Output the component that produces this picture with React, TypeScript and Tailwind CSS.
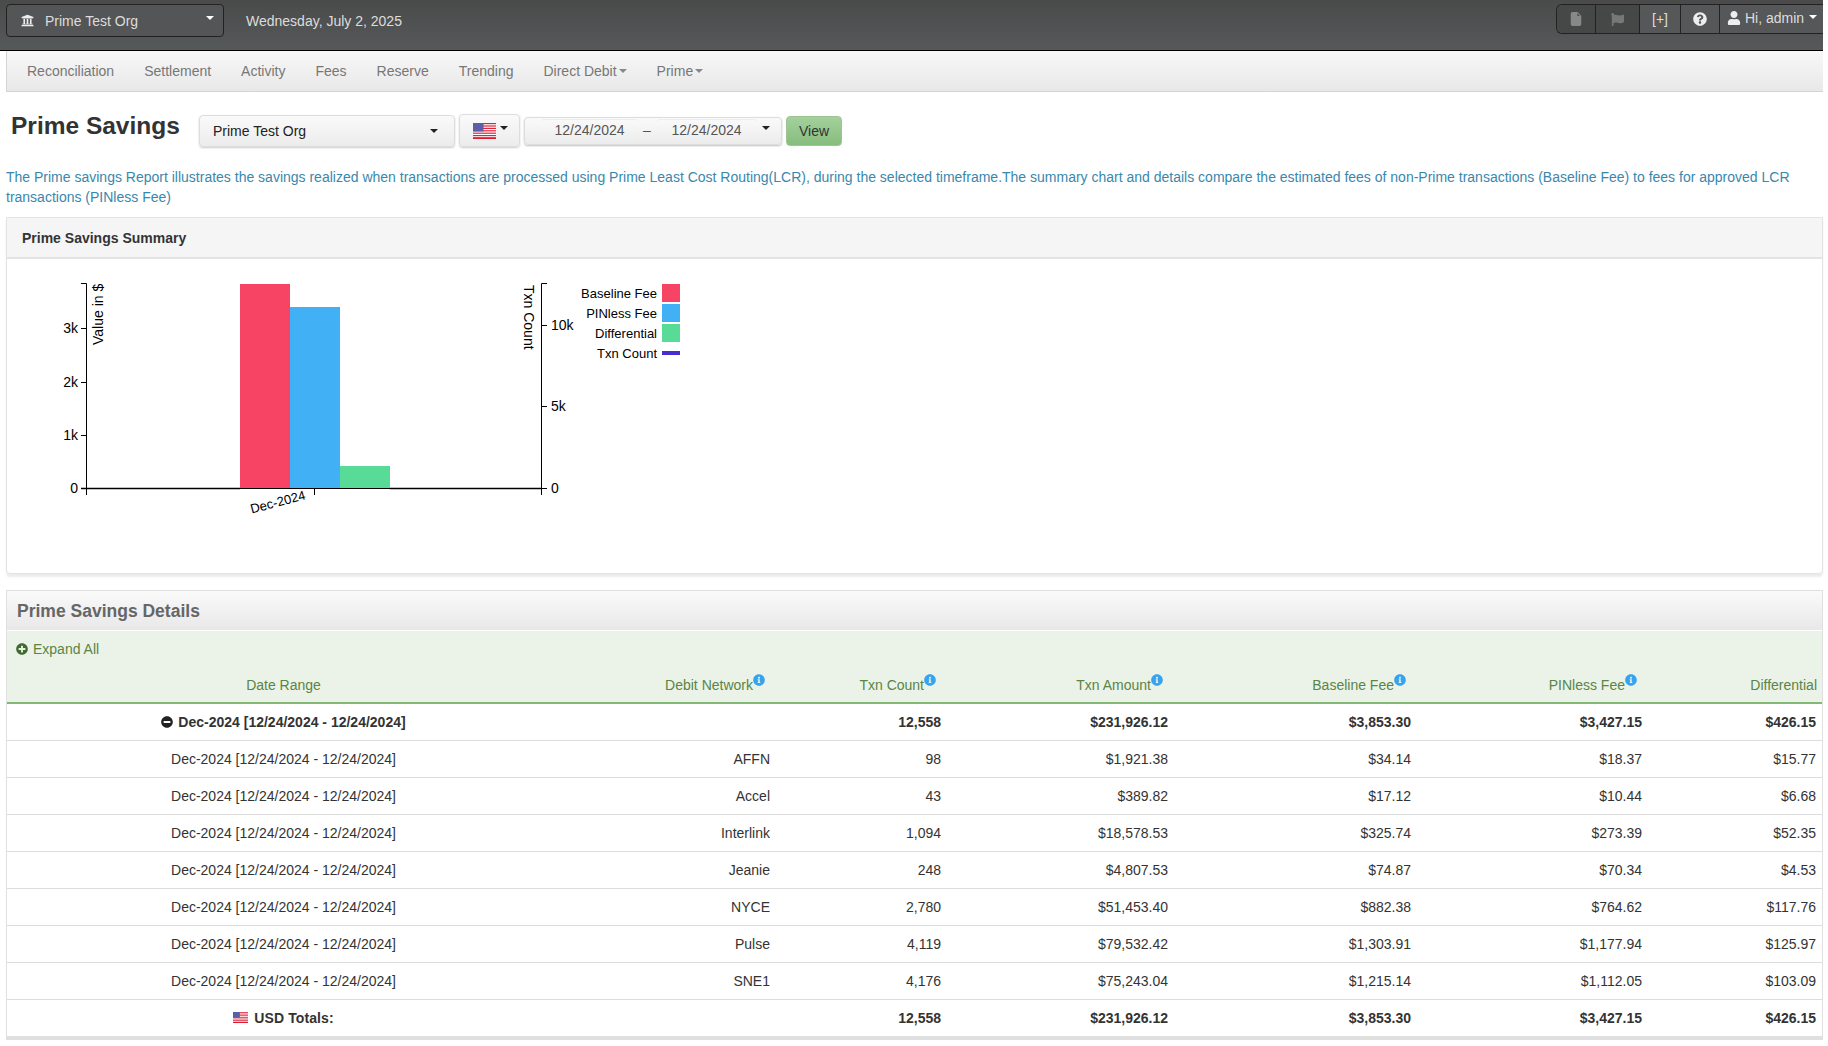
import React from 'react';
import { BsFileEarmarkFill } from 'react-icons/bs';
import { FaFlag, FaInfoCircle, FaMinusCircle, FaPlusCircle, FaQuestionCircle, FaUniversity, FaUser } from 'react-icons/fa';

const navItems = [
  { label: 'Reconciliation' },
  { label: 'Settlement' },
  { label: 'Activity' },
  { label: 'Fees' },
  { label: 'Reserve' },
  { label: 'Trending' },
  { label: 'Direct Debit', caret: true },
  { label: 'Prime', caret: true },
];

const range = 'Dec-2024 [12/24/2024 - 12/24/2024]';

const rows = [
  ['AFFN', '98', '$1,921.38', '$34.14', '$18.37', '$15.77'],
  ['Accel', '43', '$389.82', '$17.12', '$10.44', '$6.68'],
  ['Interlink', '1,094', '$18,578.53', '$325.74', '$273.39', '$52.35'],
  ['Jeanie', '248', '$4,807.53', '$74.87', '$70.34', '$4.53'],
  ['NYCE', '2,780', '$51,453.40', '$882.38', '$764.62', '$117.76'],
  ['Pulse', '4,119', '$79,532.42', '$1,303.91', '$1,177.94', '$125.97'],
  ['SNE1', '4,176', '$75,243.04', '$1,215.14', '$1,112.05', '$103.09'],
];

const totals = ['12,558', '$231,926.12', '$3,853.30', '$3,427.15', '$426.15'];

const headers = [
  { label: 'Debit Network', info: true },
  { label: 'Txn Count', info: true },
  { label: 'Txn Amount', info: true },
  { label: 'Baseline Fee', info: true },
  { label: 'PINless Fee', info: true },
  { label: 'Differential', info: false },
];

const Caret = ({ className }: { className: string }) => (
  <span className={`inline-block h-0 w-0 border-x-4 border-t-4 border-x-transparent ${className}`} />
);

const UsFlag = ({ w, h }: { w: number; h: number }) => (
  <svg width={w} height={h} viewBox="0 0 24 16" preserveAspectRatio="none" className="shrink-0">
    <rect width="24" height="16" fill="#fff" />
    {[0, 2.4, 4.8, 7.2, 9.6, 12, 14.4].map((y) => (
      <rect key={y} y={y} width="24" height="1.2" fill="#e0253a" />
    ))}
    <rect y="14.4" width="24" height="1.6" fill="#d81f33" />
    <rect width="11" height="8.4" fill="#5a5fa8" />
  </svg>
);

const Chart = () => (
  <svg width="700" height="300" viewBox="7 259 700 300" className="block" fontFamily="'Liberation Sans', Arial, sans-serif" fontSize="14" fill="#000">
    <rect x="240" y="284" width="50" height="205" fill="#f74465" />
    <rect x="290" y="307" width="50" height="182" fill="#41b0f5" />
    <rect x="340" y="466" width="50" height="23" fill="#59db98" />

    <path d="M81 283.5H86.5V495M81 328.5H86.5M81 382.5H86.5M81 435.5H86.5M81 488.5H546M314.5 489V495" fill="none" stroke="#000" />
    <path d="M547 283.5H541.5V495M547 325.5H541.5M547 406.5H541.5M541.5 488.5H547" fill="none" stroke="#000" />
    <path d="M81 488.5H240M390 488.5H541" fill="none" stroke="#000" strokeWidth="1.5" />

    <text x="78" y="333" textAnchor="end">3k</text>
    <text x="78" y="387" textAnchor="end">2k</text>
    <text x="78" y="440" textAnchor="end">1k</text>
    <text x="78" y="493" textAnchor="end">0</text>
    <text x="551" y="330">10k</text>
    <text x="551" y="411">5k</text>
    <text x="551" y="493">0</text>

    <text transform="translate(103 345) rotate(-90)">Value in $</text>
    <text transform="translate(524 285) rotate(90)">Txn Count</text>
    <text transform="translate(278 503) rotate(-15)" textAnchor="middle" dominantBaseline="middle" fontSize="13">Dec-2024</text>

    <g fontSize="13" textAnchor="end">
      <text x="657" y="297.5">Baseline Fee</text>
      <text x="657" y="317.5">PINless Fee</text>
      <text x="657" y="337.5">Differential</text>
      <text x="657" y="357.5">Txn Count</text>
    </g>
    <rect x="662" y="284" width="18" height="18" fill="#f74465" />
    <rect x="662" y="304" width="18" height="18" fill="#41b0f5" />
    <rect x="662" y="324" width="18" height="18" fill="#59db98" />
    <rect x="662" y="351" width="18" height="4" fill="#4a2dd0" />
  </svg>
);

export default function App() {
  return (
    <div className="mr-[5px] font-['Liberation_Sans',Arial,sans-serif] text-sm leading-5 text-[#333]">
      {/* top bar */}
      <header className="flex h-[51px] items-start border-b border-black bg-gradient-to-b from-[#4a4a4a] to-[#56595a]">
        <button className="ml-[6px] mt-1 flex h-[33px] w-[218px] items-center rounded border border-[#222] bg-[#535556] pl-[14px] pr-[9px] text-[#ddd]">
          <FaUniversity className="size-[13px] text-[#eee]" />
          <span className="ml-[11px]">Prime Test Org</span>
          <Caret className="mb-[5px] ml-auto border-t-white" />
        </button>
        <span className="ml-[22px] mt-[11px] text-[#ddd]">Wednesday, July 2, 2025</span>
        <div className="ml-auto mt-1 flex h-[30px] overflow-hidden rounded-l-md border-y border-l border-[#222] text-[#ddd]">
          <span className="flex w-[39px] items-center justify-center border-r border-[#222] bg-[#464747] text-[#888]">
            <BsFileEarmarkFill className="size-[14px]" />
          </span>
          <span className="flex w-[44px] items-center justify-center border-r border-[#222] bg-[#464747] text-[#777]">
            <FaFlag className="size-[13px]" />
          </span>
          <span className="flex w-[41px] items-center justify-center border-r border-[#222] bg-[#555758]">[+]</span>
          <span className="flex w-[39px] items-center justify-center border-r border-[#222] bg-[#555758]">
            <FaQuestionCircle className="size-[14px] text-[#eee]" />
          </span>
          <span className="flex w-[103px] items-start bg-[#555758] pl-[7px] pt-[3px]">
            <FaUser className="mr-[4px] mt-[3px] size-[14px] text-[#eee]" />
            Hi, admin
            <Caret className="ml-[5px] mt-[7px] border-t-white" />
          </span>
        </div>
      </header>

      {/* nav */}
      <nav className="ml-[6px] flex h-[41px] items-center border-b border-l border-[#d4d4d4] bg-gradient-to-b from-[#f8f8f8] to-[#e8e8e8] pl-[5px] text-[#777]">
        {navItems.map((item) => (
          <span key={item.label} className="flex items-center px-[15px]">
            {item.label}
            {item.caret && <Caret className="ml-[2px] border-t-[#888]" />}
          </span>
        ))}
      </nav>

      {/* title row */}
      <div className="flex items-start pl-[11px] pt-[22px]">
        <h1 className="-mt-0.5 w-[188px] text-[24.5px] font-bold leading-[28px]">Prime Savings</h1>
        <button className="mt-px flex h-8 w-[256px] items-center rounded border border-[#ddd] bg-gradient-to-b from-[#fafafa] to-[#ececec] pl-[13px] pr-4 text-[#222] shadow-[0_1px_2px_rgba(0,0,0,0.2)]">
          Prime Test Org
          <Caret className="ml-auto border-t-[#222]" />
        </button>
        <button className="ml-1 flex h-[33px] w-[61px] items-center rounded border border-[#ddd] bg-gradient-to-b from-[#fafafa] to-[#ececec] pl-[13px] shadow-[0_1px_2px_rgba(0,0,0,0.2)]">
          <UsFlag w={23} h={16} />
          <Caret className="mb-[5px] ml-[4px] border-t-[#222]" />
        </button>
        <div className="ml-1 mt-[3px] flex h-[28px] w-[258px] items-center rounded border border-[#ddd] bg-gradient-to-b from-[#fafafa] to-[#ececec] pb-[3px] pl-[15px] text-[#555] shadow-[0_1px_2px_rgba(0,0,0,0.25)]">
          <span className="w-[99px] rounded-t border-t border-[#eee] text-center">12/24/2024</span>
          <span className="w-[16px] pl-[4px]">–</span>
          <span className="ml-[1px] w-[101px] rounded-t border-t border-[#eee] text-center">12/24/2024</span>
          <Caret className="mb-[3px] ml-[5px] border-t-[#222]" />
        </div>
        <button className="ml-1 mt-[2px] h-[30px] w-[56px] rounded border border-[#9cc592] bg-gradient-to-b from-[#a4d09c] to-[#87bd7e] text-[#333]">
          View
        </button>
      </div>

      <p className="mt-5 pl-[6px] text-[#3a87ad]">
        The Prime savings Report illustrates the savings realized when transactions are processed using Prime Least Cost Routing(LCR), during the selected timeframe.The summary chart and details compare the estimated fees of non-Prime transactions (Baseline Fee) to fees for approved LCR transactions (PINless Fee)
      </p>

      {/* summary panel */}
      <section className="ml-[6px] mt-[10px] rounded-b border border-[#e3e3e3] shadow-[0_3px_2px_rgba(0,0,0,0.08)]">
        <div className="flex h-[41px] items-center border-b-2 border-[#e4e4e4] bg-[#f5f5f5] pl-[15px] font-bold">
          Prime Savings Summary
        </div>
        <div className="h-[314px]">
          <Chart />
        </div>
      </section>

      {/* details panel */}
      <section className="ml-[6px] mt-4 border-x border-t border-b-4 border-[#e0e0e0]">
        <div className="flex h-[40px] items-center border-b border-white bg-gradient-to-b from-[#fafafa] to-[#e8e8e8] pl-[10px] text-[17.5px] font-bold text-[#666]">
          Prime Savings Details
        </div>
        <table className="w-full table-fixed border-collapse">
          <colgroup>
            <col className="w-[553px]" />
            <col className="w-[218px]" />
            <col className="w-[171px]" />
            <col className="w-[227px]" />
            <col className="w-[243px]" />
            <col className="w-[231px]" />
            <col />
          </colgroup>
          <thead className="bg-[#ebf3e8] text-[#5b8446]">
            <tr className="h-[35px]">
              <th colSpan={7} className="pl-[9px] text-left font-normal">
                <span className="flex items-center gap-[5px]">
                  <FaPlusCircle className="size-[12px] text-[#3f6b2e]" />
                  Expand All
                </span>
              </th>
            </tr>
            <tr className="h-[37px] border-b-2 border-[#82b974]">
              <th className="pt-[2px] text-center font-normal">Date Range</th>
              {headers.map((h, i) => (
                <th key={h.label} className={`pt-[2px] text-right font-normal ${i === 5 ? 'pr-[5px]' : 'pr-[8px]'}`}>
                  <span className={h.info ? 'relative mr-[5px] pr-[12px]' : ''}>
                    {h.label}
                    {h.info && <FaInfoCircle className="absolute right-0 top-[-3px] size-[12px] text-[#36a3f0]" />}
                  </span>
                </th>
              ))}
            </tr>
          </thead>
          <tbody className="bg-white">
            <tr className="h-[37px] border-b border-[#ddd] font-bold">
              <td>
                <span className="flex items-center justify-center gap-[5px]">
                  <FaMinusCircle className="size-[12px] text-[#222]" />
                  {range}
                </span>
              </td>
              <td />
              {totals.map((t, i) => (
                <td key={t} className={`text-right ${i === 4 ? 'pr-[6px]' : 'pr-[8px]'}`}>{t}</td>
              ))}
            </tr>
            {rows.map((r) => (
              <tr key={r[0]} className="h-[37px] border-b border-[#ddd]">
                <td className="text-center">{range}</td>
                {r.map((v, i) => (
                  <td key={i} className={`text-right ${i === 5 ? 'pr-[6px]' : 'pr-[8px]'}`}>{v}</td>
                ))}
              </tr>
            ))}
            <tr className="h-[37px] font-bold">
              <td>
                <span className="flex items-center justify-center gap-[6px]">
                  <UsFlag w={15} h={11} />
                  <span className="tracking-[0.1px]">USD Totals:</span>
                </span>
              </td>
              <td />
              {totals.map((t, i) => (
                <td key={t} className={`text-right ${i === 4 ? 'pr-[6px]' : 'pr-[8px]'}`}>{t}</td>
              ))}
            </tr>
          </tbody>
        </table>
      </section>
    </div>
  );
}
